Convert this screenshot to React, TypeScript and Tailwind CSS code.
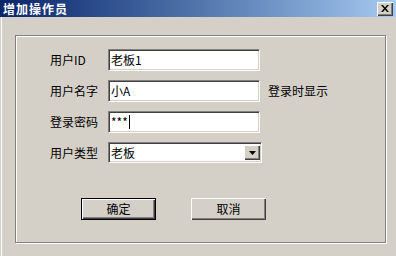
const font = { fontFamily: '"Noto Sans CJK SC", "Liberation Sans", sans-serif' }

const sunken =
  'border border-t-[#808080] border-l-[#808080] border-b-white border-r-white shadow-[inset_1px_1px_0_#404040,inset_-1px_-1px_0_#d4d0c8] bg-white'

function Field({ label, value, caret, note }: { label: string; value: string; caret?: boolean; note?: string }) {
  return (
    <div className="flex items-center h-[21px]">
      <span className="w-[58px] text-[12px] text-black leading-none">{label}</span>
      <div className={`w-[152px] h-[22px] flex items-center pl-[2px] text-[12px] text-black ${sunken}`}>
        <span className="leading-none">{value}</span>
        {caret && <span className="w-px h-[14px] bg-black ml-[1px]" />}
      </div>
      {note && <span className="ml-[8px] text-[12px] text-black leading-none">{note}</span>}
    </div>
  )
}

function Btn({ label, primary }: { label: string; primary?: boolean }) {
  return (
    <button
      className={`w-[75px] h-[22px] text-[12px] text-black bg-[#d4d0c8] flex items-center justify-center ${
        primary
          ? 'border border-black shadow-[inset_1px_1px_0_white,inset_-1px_-1px_0_#404040,inset_-2px_-2px_0_#808080]'
          : 'shadow-[inset_1px_1px_0_white,inset_-1px_-1px_0_#404040,inset_-2px_-2px_0_#808080]'
      }`}
    >
      {label}
    </button>
  )
}

export default function App() {
  return (
    <div style={font} className="w-[396px] h-[256px] bg-[#d4d0c8] flex flex-col overflow-hidden">
      <div className="h-[17px] flex items-center justify-between pl-[3px] pr-[3px] bg-gradient-to-r from-[#0a246a] to-[#a6caf0]">
        <span className="text-white text-[12px] font-bold leading-none tracking-[1px]">增加操作员</span>
        <div className="w-[16px] h-[14px] bg-[#d4d0c8] flex items-center justify-center shadow-[inset_1px_1px_0_white,inset_-1px_-1px_0_#404040,inset_-2px_-2px_0_#808080]">
          <svg width="8" height="7" viewBox="0 0 8 7">
            <path d="M0 0h2l2 2.5L6 0h2L5 3.5 8 7H6L4 4.5 2 7H0l3-3.5z" fill="black" />
          </svg>
        </div>
      </div>
      <div className="flex-1 border-l border-white ml-[1px] pl-[13px] pt-[18px]">
        <div className="w-[371px] h-[208px] border border-[#808080] shadow-[inset_1px_1px_0_white,1px_1px_0_white] pl-[34px] pt-[13px]">
          <div className="flex flex-col gap-[10px]">
            <Field label="用户ID" value="老板1" />
            <Field label="用户名字" value="小A" note="登录时显示" />
            <Field label="登录密码" value="***" caret />
            <div className="flex items-center h-[21px]">
              <span className="w-[58px] text-[12px] text-black leading-none">用户类型</span>
              <div className={`w-[154px] h-[21px] flex items-center justify-between pl-[2px] pr-[1px] text-[12px] text-black ${sunken}`}>
                <span className="leading-none">老板</span>
                <div className="w-[16px] h-[15px] bg-[#d4d0c8] flex items-center justify-center shadow-[inset_1px_1px_0_white,inset_-1px_-1px_0_#404040,inset_-2px_-2px_0_#808080]">
                  <svg width="7" height="4" viewBox="0 0 7 4">
                    <path d="M0 0h7L3.5 4z" fill="black" />
                  </svg>
                </div>
              </div>
            </div>
          </div>
          <div className="flex gap-[35px] mt-[35px] ml-[31px]">
            <Btn label="确定" primary />
            <Btn label="取消" />
          </div>
        </div>
      </div>
    </div>
  )
}
